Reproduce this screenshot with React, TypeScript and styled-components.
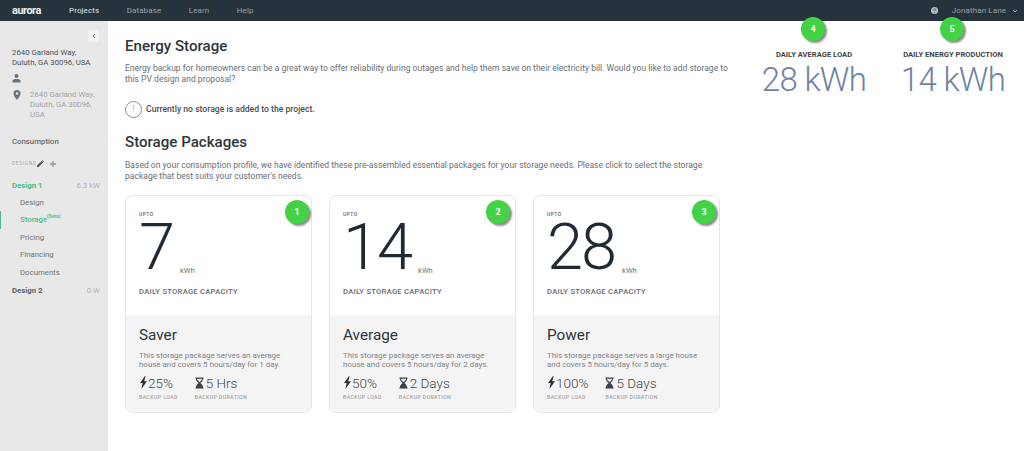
import React from 'react';
import styled, { createGlobalStyle } from 'styled-components';

const Global = createGlobalStyle`
  html, body { margin: 0; padding: 0; background: #fff; }
  body { font-family: Roboto, "Liberation Sans", sans-serif; overflow: hidden; }
  * { box-sizing: border-box; }
`;
const Page = styled.div`width:1024px;height:451px;display:flex;flex-direction:column;overflow:hidden;`;
const TopBar = styled.header`height:21px;flex:none;background:#27333c;display:flex;align-items:center;padding:0 6px 0 12px;color:#aab2b8;font-size:8px;`;
const Logo = styled.span`font-size:11px;font-weight:700;color:#eef0f1;letter-spacing:-.5px;width:57px;margin-top:-1px;`;
const Nav = styled.nav`display:flex;gap:27.5px;`;
const NavLink = styled.span<{ $active?: boolean }>`color:${p => (p.$active ? '#dfe3e5' : '#98a2a9')};font-size:8px;letter-spacing:.1px;`;
const Spacer = styled.div`flex:1;`;
const UserName = styled.span`margin-left:14px;color:#98a2a9;font-size:8px;letter-spacing:.1px;`;
const Body = styled.div`flex:1;display:flex;min-height:0;`;
const Sidebar = styled.aside`width:108px;flex:none;background:#e8e8e8;position:relative;padding:27px 0 0 12px;`;
const Collapse = styled.div`position:absolute;left:88px;top:9px;width:11px;height:12px;background:#f2f2f2;color:#777;display:flex;align-items:center;justify-content:center;`;
const Address = styled.div`font-size:7.8px;line-height:10px;color:#4b5257;`;
const PersonRow = styled.div`margin-top:5px;height:11px;color:#6b7277;display:flex;`;
const PinRow = styled.div`margin-top:6px;display:flex;gap:9px;color:#6b7277;`;
const PinText = styled.div`font-size:7.8px;line-height:10px;color:#a2a6a9;width:66px;`;
const Consumption = styled.div`margin-top:17px;font-size:7.8px;font-weight:500;color:#666c70;`;
const DesignsHead = styled.div`margin-top:14px;display:flex;align-items:center;gap:6px;color:#777;`;
const DesignsLabel = styled.span`font-size:4.6px;letter-spacing:.8px;color:#a8abad;width:19px;`;
const DesignRow = styled.div<{ $on?: boolean }>`display:flex;justify-content:space-between;padding-right:8px;margin-top:${p => (p.$on ? '14px' : '5px')};font-size:7.8px;font-weight:700;color:${p => (p.$on ? '#4fbd84' : '#5c6267')};line-height:10px;`;
const Power = styled.span`font-weight:400;color:#b0b3b5;`;
const SubList = styled.div`padding-left:8px;display:flex;flex-direction:column;margin-top:3px;`;
const SubItem = styled.div<{ $on?: boolean }>`height:17.4px;line-height:17.4px;font-size:7.8px;position:relative;color:${p => (p.$on ? '#4fbd84' : '#6f7579')};font-weight:${p => (p.$on ? 500 : 400)};
  ${p => p.$on ? `&::before{content:"";position:absolute;left:-20px;top:0;width:1px;height:18px;background:#4fbd84;}` : ''}
  sup{font-size:5px;line-height:0;}`;
const Main = styled.main`flex:1;display:flex;min-width:0;`;
const Content = styled.div`width:649px;flex:none;padding:15px 0 0 17px;`;
const H1 = styled.h1`margin:0;font-weight:500;font-size:15.1px;line-height:20px;color:#2e363c;`;
const Lead = styled.p`margin:7px 0 0;max-width:606px;font-size:8.55px;line-height:11.4px;color:#696f74;`;
const Notice = styled.div`margin-top:15px;display:flex;align-items:center;gap:4px;font-size:8.65px;font-weight:500;color:#484f54;height:17px;`;
const NoticeIcon = styled.span`width:17px;height:17px;border:1px solid #8d9296;border-radius:50%;display:flex;align-items:center;justify-content:center;color:#777;font-size:9px;font-weight:300;`;
const H2 = styled(H1)`margin-top:14px;`;
const PackagesLead = styled(Lead)`margin-top:8px;`;
const Cards = styled.div`margin-top:12px;display:flex;gap:17px;`;
const Card = styled.article`width:187px;height:218px;border:1px solid #e6e6e6;border-radius:7px;position:relative;overflow:visible;display:flex;flex-direction:column;`;
const CardTop = styled.div`height:119px;padding:15px 13px 0;flex:none;`;
const Upto = styled.div`font-size:5px;letter-spacing:.4px;font-weight:500;color:#666;line-height:6px;`;
const CapRow = styled.div`display:flex;align-items:flex-end;height:57px;margin-top:2px;`;
const Cap = styled.span`font-size:65px;font-weight:300;line-height:57px;color:#1f2a35;letter-spacing:-2px;`;
const Unit = styled.span`font-size:7.5px;color:#6c7277;margin-left:7px;line-height:9px;margin-bottom:1px;`;
const CapLabel = styled.div`margin-top:11px;font-size:7.65px;font-weight:500;letter-spacing:.25px;color:#666c71;line-height:9px;`;
const CardFoot = styled.div`flex:1;background:#f4f4f5;padding:11px 13px 0;border-radius:0 0 7px 7px;`;
const PlanName = styled.div`font-size:15.3px;font-weight:400;line-height:19px;color:#2e363c;`;
const Desc = styled.p`margin:6px 0 0;font-size:7.95px;line-height:9px;color:#81868a;`;
const Metrics = styled.div`display:flex;gap:17px;margin-top:6px;`;
const Metric = styled.div`display:flex;flex-direction:column;`;
const MetricValue = styled.div`display:flex;align-items:center;font-size:13.5px;line-height:16px;color:#40474d;font-weight:300;`;
const MetricLabel = styled.div`font-size:5.2px;letter-spacing:.4px;font-weight:500;color:#a2a5a8;margin-top:3px;`;
const Badge = styled.span`position:absolute;width:24px;height:24px;border-radius:50%;background:#43d145;color:#f3fff0;font-weight:700;font-size:9px;display:flex;align-items:center;justify-content:center;box-shadow:2px 2px 2px rgba(40,50,40,.55);`;
const CardBadge = styled(Badge)<{ $right: number }>`top:4px;right:${p => p.$right}px;`;
const Stats = styled.section`flex:1;display:flex;gap:22px;padding:29px 0 0 0;`;
const Stat = styled.div<{ $w: number }>`width:${p => p.$w}px;position:relative;display:flex;flex-direction:column;align-items:center;`;
const StatBadge = styled(Badge)`top:-33px;left:50%;margin-left:-13px;`;
const StatLabel = styled.div`font-size:7.6px;font-weight:700;color:#3e454a;line-height:9px;white-space:nowrap;`;
const StatValue = styled.div`font-size:33px;font-weight:300;color:#6f83a5;line-height:36px;margin-top:3px;letter-spacing:-.7px;white-space:nowrap;`;

const Bolt = () => <svg width="9" height="13" viewBox="0 0 9 13"><path d="M6 0 1 7h2.6L2.4 13 8 5.2H5.2L6.6 0z" fill="#2b3238" /></svg>;
const Glass = () => <svg width="10" height="12" viewBox="0 0 10 12" style={{ marginRight: 1 }}><path d="M.5.5h8v1.2H8C8 4 6.4 5 5.4 6 6.4 7 8 8 8 10.3h.5v1.2h-8v-1.2H1C1 8 2.600 7 3.600 6 2.600 5 1 4 1 1.700H.5z" fill="#3a4147" /><path d="M2 1.700h5c0 1.300-1 2.300-2.500 3.400C3 4 2 3 2 1.700z" fill="#e9e9ea" /></svg>;
const Person = () => <svg width="9" height="10" viewBox="0 0 9 10"><circle cx="4.500" cy="3" r="2" fill="currentColor" /><path d="M.5 9.500V7.800C.5 6.500 2.500 6 4.500 6s4 .5 4 1.800v1.700z" fill="currentColor" /></svg>;
const Pin = () => <svg width="8" height="10" viewBox="0 0 8 10" style={{ flex: 'none', marginLeft: 1 }}><path fillRule="evenodd" d="M4 0a3.500 3.500 0 0 1 3.500 3.500C7.500 6 4 10 4 10S.5 6 .5 3.500A3.500 3.500 0 0 1 4 0zm0 2.200a1.300 1.300 0 1 0 0 2.600 1.300 1.300 0 0 0 0-2.600z" fill="currentColor" /></svg>;

const cards = [
  { n: 1, right: 2, cap: '7', name: 'Saver', desc: <>This storage package serves an average<br />house and covers 5 hours/day for 1 day.</>, load: '25%', dur: '5 Hrs' },
  { n: 2, right: 5, cap: '14', name: 'Average', desc: <>This storage package serves an average<br />house and covers 5 hours/day for 2 days.</>, load: '50%', dur: '2 Days' },
  { n: 3, right: 3, cap: '28', name: 'Power', desc: <>This storage package serves a large house<br />and covers 5 hours/day for 5 days.</>, load: '100%', dur: '5 Days' },
];

export default function App() {
  return (
    <Page>
      <Global />
      <TopBar>
        <Logo>aurora</Logo>
        <Nav>
          <NavLink $active>Projects</NavLink>
          <NavLink>Database</NavLink>
          <NavLink>Learn</NavLink>
          <NavLink>Help</NavLink>
        </Nav>
        <Spacer />
        <svg width="7" height="7" viewBox="0 0 7 7"><circle cx="3.500" cy="3.500" r="3.500" fill="#b5bbbf" /><path d="M2.500 2.800c0-1.300 2-1.300 2 0 0 .7-1 .7-1 1.400M3.500 5v.6" stroke="#27333c" strokeWidth=".7" fill="none" /></svg>
        <UserName>Jonathan Lane</UserName>
        <svg width="6" height="4" viewBox="0 0 6 4" style={{ marginLeft: 6 }}><path d="M1 1l2 2 2-2" stroke="#98a2a9" fill="none" /></svg>
      </TopBar>
      <Body>
        <Sidebar>
          <Collapse><svg width="4" height="6" viewBox="0 0 4 6"><path d="M3 1 1 3l2 2" stroke="#777" fill="none" /></svg></Collapse>
          <Address>2640 Garland Way,<br />Duluth, GA 30096, USA</Address>
          <PersonRow><Person /></PersonRow>
          <PinRow><Pin /><PinText>2640 Garland Way, Duluth, GA 30096, USA</PinText></PinRow>
          <Consumption>Consumption</Consumption>
          <DesignsHead>
            <DesignsLabel>DESIGNS</DesignsLabel>
            <svg width="7" height="7" viewBox="0 0 7 7"><path d="M0 7V5.400L4.500.9l1.600 1.600L1.600 7zM5 .4l.5-.4L7 1.500l-.4.500z" fill="#555" /></svg>
            <svg width="6" height="6" viewBox="0 0 6 6"><path d="M2.300 0h1.400v2.300H6v1.400H3.700V6H2.300V3.700H0V2.300h2.300z" fill="#999" /></svg>
          </DesignsHead>
          <DesignRow $on><span>Design 1</span><Power>6.3 kW</Power></DesignRow>
          <SubList>
            <SubItem>Design</SubItem>
            <SubItem $on>Storage<sup>(Beta)</sup></SubItem>
            <SubItem>Pricing</SubItem>
            <SubItem>Financing</SubItem>
            <SubItem>Documents</SubItem>
          </SubList>
          <DesignRow><span>Design 2</span><Power>0 W</Power></DesignRow>
        </Sidebar>
        <Main>
          <Content>
            <H1>Energy Storage</H1>
            <Lead>Energy backup for homeowners can be a great way to offer reliability during outages and help them save on their electricity bill. Would you like to add storage to this PV design and proposal?</Lead>
            <Notice><NoticeIcon>!</NoticeIcon>Currently no storage is added to the project.</Notice>
            <H2>Storage Packages</H2>
            <PackagesLead>Based on your consumption profile, we have identified these pre-assembled essential packages for your storage needs. Please click to select the storage package that best suits your customer's needs.</PackagesLead>
            <Cards>
              {cards.map(c => (
                <Card key={c.n}>
                  <CardBadge $right={c.right}>{c.n}</CardBadge>
                  <CardTop>
                    <Upto>UPTO</Upto>
                    <CapRow><Cap>{c.cap}</Cap><Unit>kWh</Unit></CapRow>
                    <CapLabel>DAILY STORAGE CAPACITY</CapLabel>
                  </CardTop>
                  <CardFoot>
                    <PlanName>{c.name}</PlanName>
                    <Desc>{c.desc}</Desc>
                    <Metrics>
                      <Metric><MetricValue><Bolt />{c.load}</MetricValue><MetricLabel>BACKUP LOAD</MetricLabel></Metric>
                      <Metric><MetricValue><Glass />{c.dur}</MetricValue><MetricLabel>BACKUP DURATION</MetricLabel></Metric>
                    </Metrics>
                  </CardFoot>
                </Card>
              ))}
            </Cards>
          </Content>
          <Stats>
            <Stat $w={114}><StatBadge>4</StatBadge><StatLabel>DAILY AVERAGE LOAD</StatLabel><StatValue>28 kWh</StatValue></Stat>
            <Stat $w={120}><StatBadge>5</StatBadge><StatLabel>DAILY ENERGY PRODUCTION</StatLabel><StatValue>14 kWh</StatValue></Stat>
          </Stats>
        </Main>
      </Body>
    </Page>
  );
}
